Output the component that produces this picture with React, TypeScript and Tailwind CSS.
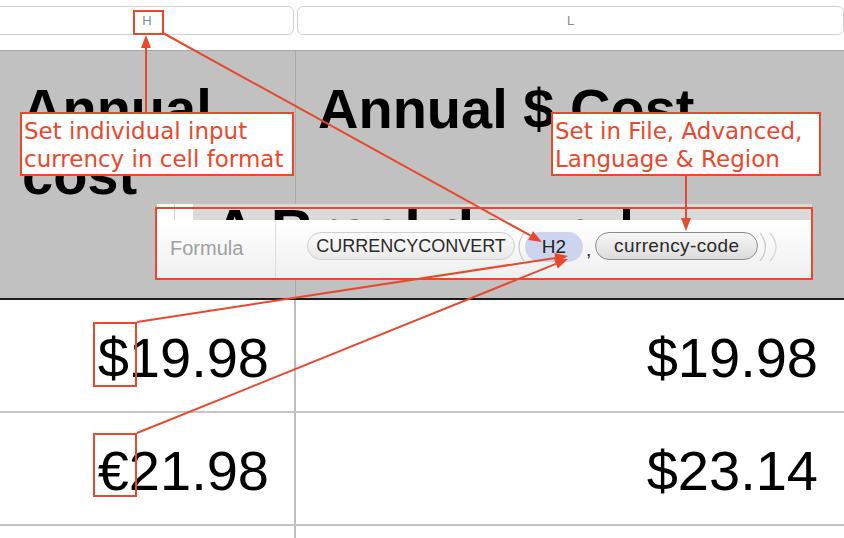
import React from 'react';

const RED = '#e8482b';

// arrow from (x1,y1) to tip (x2,y2)
const arrow = (x1: number, y1: number, x2: number, y2: number) => {
  const a = Math.atan2(y2 - y1, x2 - x1);
  const L = 13;
  const W = 5;
  const bx = x2 - L * Math.cos(a);
  const by = y2 - L * Math.sin(a);
  const px = -Math.sin(a) * W;
  const py = Math.cos(a) * W;
  return { x1, y1, bx, by, head: `${x2},${y2} ${bx + px},${by + py} ${bx - px},${by - py}` };
};

const arrows = [
  arrow(146, 112, 146, 35),
  arrow(163, 33, 542, 242),
  arrow(686, 176, 686, 231),
  arrow(137, 322, 568, 256),
  arrow(137, 433, 568, 259),
];

const Arrows = () => (
  <svg className="absolute inset-0 pointer-events-none" width={844} height={538}>
    {arrows.map((a, i) => (
      <g key={i}>
        <line x1={a.x1} y1={a.y1} x2={a.bx} y2={a.by} stroke={RED} strokeWidth={2} />
        <polygon points={a.head} fill={RED} />
      </g>
    ))}
  </svg>
);

const FormulaBar = () => (
  <div className="absolute left-[157px] top-[204px] w-[655px] flex flex-col">
    {/* strip over the cell, shows the tops of the text behind */}
    <div className="h-[16px] flex overflow-hidden bg-[#dadada]">
      <div className="w-[18px] bg-white border-r border-[#d0d0d0]" />
      <div className="w-[18px] bg-white" />
      <div className="relative flex-1 overflow-hidden">
        <span className="absolute left-[20px] top-[-3px] whitespace-nowrap text-[60px] leading-none font-bold text-black font-['Liberation_Sans',Arial,sans-serif]">
          A Breakdown
        </span>
        <div className="absolute left-[430px] top-[5px] w-[7px] h-[12px] bg-black" />
      </div>
    </div>
    <div className="h-[58px] flex bg-gradient-to-b from-white to-[#efefef] font-['Liberation_Sans',Arial,sans-serif]">
      <div className="w-[119px] border-r border-[#dcdcdc] pl-[13px] pt-[13px] text-[20px] text-[#a0a0a0]">
        Formula
      </div>
      <div className="flex items-start pl-[31px] pt-[12px]">
        <div className="w-[208px] h-[28px] rounded-full border border-[#cfcfcf] bg-gradient-to-b from-[#fcfcfc] to-[#e9e9e9] flex items-center justify-center text-[18px] text-[#2a2a2a]">
          CURRENCYCONVERT
        </div>
        <svg width={12} height={30} className="-ml-[2px]">
          <path d="M11 1 Q1 15 11 29" fill="none" stroke="#c8c8c8" strokeWidth={1.2} />
        </svg>
        <div className="w-[58px] h-[30px] rounded-full bg-[#cdd5ee] flex items-center justify-center text-[19px] text-[#222]">
          H2
        </div>
        <span className="ml-[3px] mt-[4px] text-[19px] text-[#222]">,</span>
        <div className="ml-[4px] w-[163px] h-[28px] rounded-full border border-[#8c8c8c] bg-gradient-to-b from-[#f7f7f7] to-[#dcdcdc] flex items-center justify-center text-[19px] tracking-[0.02em] text-[#2a2a2a]">
          currency-code
        </div>
        <svg width={26} height={30} className="ml-[1px]">
          <path d="M1 1 Q12 15 1 29" fill="none" stroke="#c8c8c8" strokeWidth={1.2} />
          <path d="M11 1 Q23 15 11 29" fill="none" stroke="#d6d6d6" strokeWidth={1.2} />
        </svg>
      </div>
    </div>
  </div>
);

const Callout = ({ className, lines }: { className: string; lines: string[] }) => (
  <div
    className={`absolute bg-white border-2 border-[#e8482b] pl-[2px] pt-[3px] text-[23px] leading-[28px] text-[#e8482b] font-['DejaVu_Sans',Verdana,sans-serif] ${className}`}
  >
    {lines.map((l) => (
      <div key={l} className="whitespace-nowrap">{l}</div>
    ))}
  </div>
);

export default function App() {
  return (
    <div className="relative w-[844px] h-[538px] overflow-hidden bg-white font-['Liberation_Sans',Arial,sans-serif]">
      {/* column headers */}
      <div className="h-[50px] pt-[6px] flex">
        <div className="-ml-[6px] w-[300px] h-[29px] rounded-md border-[1.5px] border-[#d2d2d2] flex items-center justify-center text-[13px] text-[#8a8a8a]">
          <span className="pl-[6px]">H</span>
        </div>
        <div className="ml-[3px] flex-1 h-[29px] rounded-md border-[1.5px] border-[#d2d2d2] flex items-center justify-center text-[13px] text-[#8a8a8a]">
          L
        </div>
      </div>

      {/* header row */}
      <div className="flex h-[250px] border-t border-[#a8a8a8] border-b-2 border-b-[#1c1c1c] bg-[#c0c1c0]">
        <div className="w-[296px] border-r border-[#a9a9a9] pl-[22px] pt-[25px] text-[56px] leading-[66px] font-bold text-black">
          Annual
          <br />
          cost
        </div>
        <div className="flex-1 pl-[22px] pt-[25px] text-[56px] leading-[66px] font-bold text-black whitespace-nowrap">
          Annual $ Cost
        </div>
      </div>

      {/* data rows */}
      {[
        ['$19.98', '$19.98'],
        ['€21.98', '$23.14'],
        ['', ''],
      ].map(([a, b], i) => (
        <div key={i} className="flex h-[113px] border-b-2 border-[#c6c6c6] text-[56px] leading-none text-black">
          <div className="w-[296px] border-r-2 border-[#bdbdbd] pr-[25px] pt-[30px] text-right">{a}</div>
          <div className="flex-1 pr-[26px] pt-[30px] text-right">{b}</div>
        </div>
      ))}

      {/* annotations */}
      <FormulaBar />
      <div className="absolute left-[155px] top-[207px] w-[658px] h-[73px] border-2 border-[#e8482b]" />
      <div className="absolute left-[133px] top-[10px] w-[31px] h-[25px] border-2 border-[#e8482b]" />
      <div className="absolute left-[93px] top-[322px] w-[44px] h-[65px] border-2 border-[#e8482b]" />
      <div className="absolute left-[93px] top-[433px] w-[44px] h-[64px] border-2 border-[#e8482b]" />
      <Callout className="left-[20px] top-[112px] w-[274px] h-[64px]" lines={['Set individual input', 'currency in cell format']} />
      <Callout className="left-[551px] top-[112px] w-[270px] h-[64px]" lines={['Set in File, Advanced,', 'Language & Region']} />
      <Arrows />
    </div>
  );
}
